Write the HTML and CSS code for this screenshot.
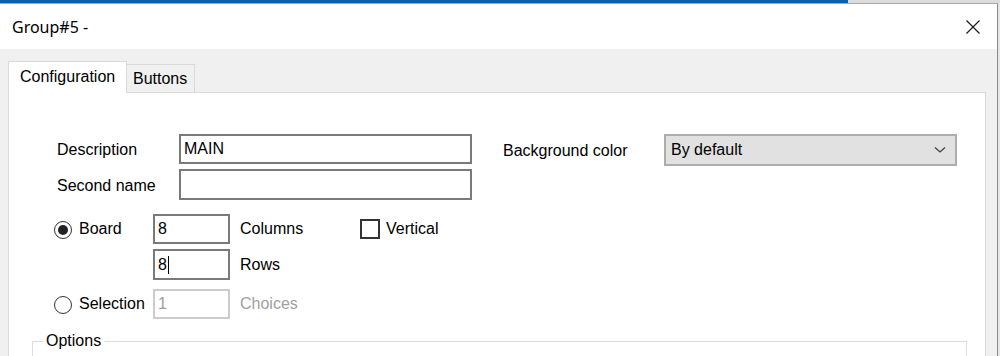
FILE: index.html
```html
<!DOCTYPE html>
<html>
<head>
    <title>Group#5 -</title>
    <link rel="stylesheet" href="styles.css">
</head>
<body>
<div class="backdrop">
    <div class="backdrop-blue"></div>
    <div class="backdrop-grey"></div>
</div>

<div class="dialog">
    <div class="titlebar">
        <span class="title">Group#5 -</span>
        <svg class="close" width="14" height="14" viewBox="0 0 14 14">
            <path d="M0.5 0.5 L13.5 13.5 M13.5 0.5 L0.5 13.5" stroke="#1a1a1a" stroke-width="1.2" fill="none"/>
        </svg>
    </div>

    <div class="dialog-body">
        <div class="tabs">
            <div class="tab tab-active">Configuration</div>
            <div class="tab tab-other">Buttons</div>
        </div>

        <div class="panel">
            <div class="row-top">
                <div class="fields">
                    <label class="field-label">Description</label>
                    <div class="textbox">MAIN</div>
                    <label class="field-label">Second name</label>
                    <div class="textbox"></div>
                </div>
                <div class="bg-field">
                    <label class="bg-label">Background color</label>
                    <div class="combo">
                        <span>By default</span>
                        <svg width="12" height="8" viewBox="0 0 12 8">
                            <path d="M1 1.5 L6 6 L11 1.5" stroke="#404040" stroke-width="1.3" fill="none"/>
                        </svg>
                    </div>
                </div>
            </div>

            <div class="board-grid">
                <div class="radio-item">
                    <span class="radio radio-on"></span>
                    <span>Board</span>
                </div>
                <div class="textbox small">8</div>
                <span class="unit">Columns</span>
                <div class="check-item">
                    <span class="checkbox"></span>
                    <span>Vertical</span>
                </div>

                <div></div>
                <div class="textbox small"><span class="caret">8</span></div>
                <span class="unit">Rows</span>
                <div></div>

                <div class="radio-item low">
                    <span class="radio"></span>
                    <span>Selection</span>
                </div>
                <div class="textbox small disabled low">1</div>
                <span class="unit muted low">Choices</span>
                <div></div>
            </div>

            <fieldset class="options">
                <legend>Options</legend>
            </fieldset>
        </div>
    </div>
</div>
</body>
</html>
```

FILE: styles.css
```css
body {
  margin: 0;
  height: 356px;
  overflow: hidden;
  background-color: #e6e6e6;
  font-family: "Liberation Sans", Arial, sans-serif;
  font-size: 16px;
  color: #000;
}

.backdrop {
  display: flex;
  height: 3px;
}

.backdrop-blue {
  width: 848px;
  background-color: #0f5fa8;
}

.backdrop-grey {
  flex: 1;
  background-color: #dcdcdc;
}

.dialog {
  width: 998px;
  height: 353px;
  overflow: hidden;
  box-sizing: border-box;
  border-right: 1px solid #8a8a8a;
  border-top: 1px solid #a8a8a8;
  background-color: #f0f0f0;
}

.titlebar {
  height: 45px;
  background-color: #fff;
  display: flex;
  align-items: center;
  justify-content: space-between;
  padding: 0 17px 0 12px;
}

.title {
  font-family: "Noto Sans", sans-serif;
  font-size: 16px;
  color: #000;
}

.dialog-body {
  padding: 12px 11px 0 8px;
}

.tabs {
  display: flex;
  align-items: flex-end;
  height: 31px;
}

.tab {
  box-sizing: border-box;
  border: 1px solid #d9d9d9;
  border-bottom: none;
  display: flex;
  align-items: center;
}

.tab-active {
  width: 119px;
  height: 32px;
  margin-bottom: -1px;
  padding: 0 0 2px 11px;
  background-color: #fff;
  position: relative;
}

.tab-other {
  width: 68px;
  height: 28px;
  padding-left: 6px;
  border-left: none;
  background-color: #f0f0f0;
}

.panel {
  height: 300px;
  border: 1px solid #d9d9d9;
  background-color: #fff;
}

.row-top {
  display: flex;
  align-items: flex-start;
  margin-top: 41px;
  padding-left: 48px;
}

.fields {
  display: grid;
  grid-template-columns: 122px 293px;
  grid-template-rows: 30px 31px;
  row-gap: 5px;
  align-items: center;
}

.field-label, .bg-label {
  padding-top: 2px;
}

.textbox {
  box-sizing: border-box;
  height: 100%;
  border: 2px solid #7a7a7a;
  padding-left: 3px;
  display: flex;
  align-items: center;
  color: #000;
}

.bg-field {
  display: flex;
  align-items: center;
  margin-left: 31px;
  height: 32px;
}

.bg-label {
  width: 161px;
}

.combo {
  box-sizing: border-box;
  width: 293px;
  height: 32px;
  background-color: #e1e1e1;
  border: 2px solid #adadad;
  display: flex;
  align-items: center;
  justify-content: space-between;
  padding: 0 9px 0 5px;
}

.board-grid {
  display: grid;
  grid-template-columns: 99px 77px 130px auto;
  grid-template-rows: 30px 31px 34px;
  row-gap: 5px;
  align-items: center;
  margin-top: 14px;
  padding-left: 45px;
}

.low {
  align-self: end;
  height: 30px;
}

.radio-item, .check-item {
  display: flex;
  align-items: center;
  gap: 7px;
  height: 30px;
}

.radio {
  box-sizing: border-box;
  width: 18px;
  height: 18px;
  margin-top: 1px;
  border: 1px solid #333;
  border-radius: 50%;
  display: flex;
  align-items: center;
  justify-content: center;
}

.radio-on::after {
  content: "";
  width: 10px;
  height: 10px;
  border-radius: 50%;
  background-color: #222;
}

.check-item {
  gap: 6px;
}

.checkbox {
  box-sizing: border-box;
  width: 20px;
  height: 20px;
  border: 2px solid #333;
}

.unit {
  padding-left: 10px;
}

.low.unit {
  display: flex;
  align-items: center;
}

.muted {
  color: #a0a0a0;
}

.disabled {
  border-color: #cccccc;
  color: #a0a0a0;
}

.caret {
  border-right: 1px solid #000;
  padding-right: 1px;
}

.options {
  margin: 13px 18px 0 23px;
  height: 60px;
  border: 1px solid #dcdcdc;
  padding: 0;
}

.options legend {
  margin-left: 10px;
  padding: 0 3px;
}
```
